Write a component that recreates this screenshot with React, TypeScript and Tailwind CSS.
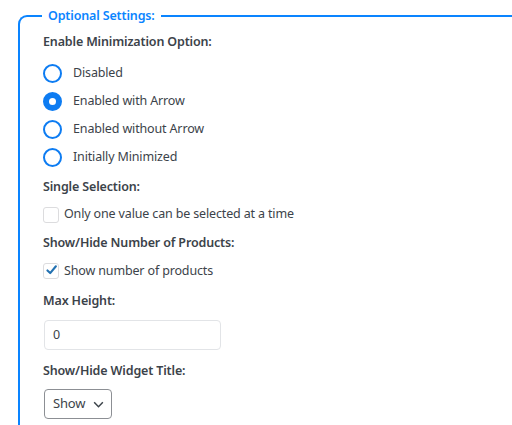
import { useState } from "react";

const radioOptions = [
  "Disabled",
  "Enabled with Arrow",
  "Enabled without Arrow",
  "Initially Minimized",
];

function Radio({ checked }: { checked: boolean }) {
  return (
    <span
      className={`flex h-[19px] w-[19px] shrink-0 items-center justify-center rounded-full border-2 border-[#0d7cf2] ${
        checked ? "bg-[#0d7cf2]" : "bg-white"
      }`}
    >
      {checked && <span className="h-[7px] w-[7px] rounded-full bg-white" />}
    </span>
  );
}

function Checkbox({ checked }: { checked: boolean }) {
  return (
    <span className="flex h-4 w-4 shrink-0 items-center justify-center rounded-[3px] border border-[#dcdcde] bg-white">
      {checked && (
        <svg viewBox="0 0 16 16" className="-mt-[2px] ml-[1px] h-[16px] w-[16px]">
          <path
            d="M3 8.6 6.4 11.8 13.4 3.4"
            fill="none"
            stroke="#2271b1"
            strokeWidth="2.6"
            strokeLinecap="round"
            strokeLinejoin="round"
          />
        </svg>
      )}
    </span>
  );
}

export default function App() {
  const [selected] = useState(1);

  return (
    <div
      className="h-[425px] w-[512px] overflow-hidden bg-white text-[12.5px] tracking-[-0.15px] text-[#3c434a]"
      style={{ fontFamily: '"Noto Sans", "Open Sans", sans-serif' }}
    >
      <fieldset className="ml-[18px] mt-[7px] w-[620px] rounded-tl-[9px] border-l-2 border-t-2 border-[#0a84ff] pb-10 pl-[23px] pt-[7px]">
        <legend className="-ml-[1px] px-[6px] text-[12.5px] font-semibold text-[#0a84ff]">
          Optional Settings:
        </legend>

        <div className="font-semibold text-[#3c434a]">Enable Minimization Option:</div>
        <div className="mt-[12px] flex flex-col gap-[9px]">
          {radioOptions.map((label, i) => (
            <label key={label} className="flex h-[19px] items-center gap-[11px]">
              <Radio checked={i === selected} />
              <span>{label}</span>
            </label>
          ))}
        </div>

        <div className="mt-[11px] font-semibold">Single Selection:</div>
        <label className="mt-[9px] flex items-center gap-[5px]">
          <Checkbox checked={false} />
          <span>Only one value can be selected at a time</span>
        </label>

        <div className="mt-[10px] font-semibold">Show/Hide Number of Products:</div>
        <label className="mt-[9px] flex items-center gap-[5px]">
          <Checkbox checked />
          <span>Show number of products</span>
        </label>

        <div className="mt-[11px] font-semibold">Max Height:</div>
        <div className="mt-[10px] flex h-[30px] w-[177px] items-center rounded-[4px] border border-[#e2e4e7] bg-white px-[8px] ml-[1px]">
          0
        </div>

        <div className="mt-[12px] font-semibold">Show/Hide Widget Title:</div>
        <div className="mt-[8px] ml-[1px] flex h-[30px] w-[68px] items-center justify-between rounded-[4px] border border-[#8c8f94] bg-white pl-[8px] pr-[6px]">
          <span className="text-[13px]">Show</span>
          <svg viewBox="0 0 12 12" className="h-[13px] w-[13px]">
            <path d="M2 4 6 8 10 4" fill="none" stroke="#3c434a" strokeWidth="1.4" />
          </svg>
        </div>
      </fieldset>
    </div>
  );
}
